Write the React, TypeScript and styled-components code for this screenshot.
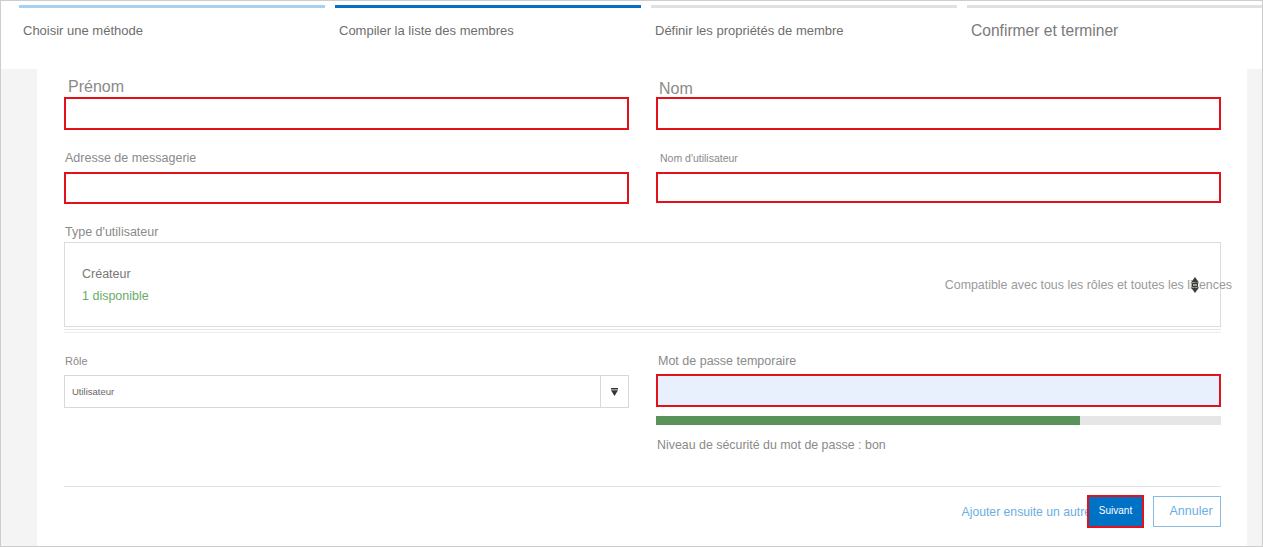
import React from "react";
import styled, { createGlobalStyle } from "styled-components";

const Global = createGlobalStyle`
  html, body { margin: 0; padding: 0; background: #fff; }
  * { box-sizing: border-box; }
`;

const Frame = styled.div`
  width: 1263px;
  height: 547px;
  border: 1px solid #cdcdcd;
  display: flex;
  flex-direction: column;
  background: #fff;
  font-family: "Liberation Sans", Arial, sans-serif;
  overflow: hidden;
`;

const Header = styled.header`
  flex: none;
  height: 68px;
  display: grid;
  grid-template-columns: 306px 306px 306px 1fr;
  column-gap: 10px;
  padding: 4px 0 0 18px;
`;

const Step = styled.div`
  display: flex;
  flex-direction: column;
`;

type StepState = "done" | "active" | "todo";

const StepBar = styled.div<{ $state: StepState }>`
  height: 3px;
  background: ${(p) =>
    p.$state === "done" ? "#a8d1f1" : p.$state === "active" ? "#0a6fc2" : "#e0e0e0"};
`;

const StepLabel = styled.div<{ $big?: boolean }>`
  margin-top: 15px;
  padding-left: 4px;
  font-size: ${(p) => (p.$big ? "15.6px" : "13px")};
  line-height: 16px;
  color: ${(p) => (p.$big ? "#7a7a7a" : "#6e6e6e")};
  white-space: nowrap;
`;

const Body = styled.div`
  flex: 1;
  display: flex;
  background: #f4f4f4;
  padding: 0 15px 0 36px;
`;

const Panel = styled.main`
  flex: 1;
  display: flex;
  flex-direction: column;
  background: #fff;
  padding: 0 26px 0 27px;
`;

const FieldGrid = styled.div<{ $top: number }>`
  display: grid;
  grid-template-columns: 565px 565px;
  column-gap: 27px;
  margin-top: ${(p) => p.$top}px;
`;

const Field = styled.div`
  display: flex;
  flex-direction: column;
  min-width: 0;
`;

const Label = styled.label<{ $size: number; $gap: number; $lh?: number; $inset?: number }>`
  display: block;
  font-size: ${(p) => p.$size}px;
  line-height: ${(p) => p.$lh ?? 14}px;
  margin-bottom: ${(p) => p.$gap}px;
  padding-left: ${(p) => p.$inset ?? 1}px;
  color: #8a8a8a;
  white-space: nowrap;
`;

const TextInput = styled.div<{ $h: number; $filled?: boolean }>`
  height: ${(p) => p.$h}px;
  border: 2px solid #e3111c;
  background: ${(p) => (p.$filled ? "#e8f0fe" : "#fff")};
`;

const TypeSection = styled.section`
  margin-top: 21px;
  display: flex;
  flex-direction: column;
`;

const TypeBox = styled.div`
  height: 85px;
  border: 1px solid #dcdcdc;
  display: flex;
  align-items: center;
  justify-content: space-between;
  padding-left: 17px;
`;

const TypeInfo = styled.div`
  display: flex;
  flex-direction: column;
  row-gap: 8px;
`;

const TypeName = styled.div`
  font-size: 12.5px;
  line-height: 14px;
  color: #777;
`;

const Available = styled.div`
  font-size: 12.5px;
  line-height: 14px;
  color: #6aab6a;
`;

const Compat = styled.div`
  position: relative;
  margin-right: -12px;
  font-size: 12.4px;
  line-height: 14px;
  color: #9a9a9a;
  white-space: nowrap;
`;

const SortIcon = styled.svg`
  position: absolute;
  right: 33px;
  top: -1px;
`;

const DoubleRule = styled.div`
  margin-top: 2px;
  height: 4px;
  border-top: 1px solid #e6e6e6;
  border-bottom: 1px solid #ececec;
`;

const Select = styled.div`
  height: 33px;
  display: flex;
  border: 1px solid #d8d8d8;
`;

const SelectValue = styled.div`
  flex: 1;
  display: flex;
  align-items: center;
  padding-left: 7px;
  font-size: 9.5px;
  color: #666;
`;

const SelectArrow = styled.div`
  width: 28px;
  border-left: 1px solid #d8d8d8;
  display: flex;
  align-items: center;
  justify-content: center;
`;

const Strength = styled.div`
  margin-top: 9px;
  height: 9px;
  display: flex;
  background: #e6e6e6;
`;

const StrengthFill = styled.div`
  background: #5a935a;
`;

const Hint = styled.div`
  margin-top: 13px;
  font-size: 12.4px;
  line-height: 14px;
  color: #8a8a8a;
  padding-left: 1px;
`;

const Divider = styled.hr`
  margin: 34px 0 0;
  border: 0;
  height: 1px;
  background: #e3e3e3;
`;

const Actions = styled.div`
  margin-top: 8px;
  display: flex;
  justify-content: flex-end;
  align-items: center;
`;

const LinkButton = styled.span`
  font-size: 12.2px;
  color: #6aaee3;
  white-space: nowrap;
`;

const PrimaryButton = styled.button`
  margin-left: -4px;
  width: 57px;
  height: 33px;
  border: 2px solid #e3111c;
  background: #0072c6;
  color: #fff;
  font-family: inherit;
  font-size: 10px;
  padding: 0 0 2px;
`;

const SecondaryButton = styled.button`
  margin-left: 9px;
  width: 68px;
  height: 31px;
  border: 1px solid #86bbe6;
  background: #fff;
  color: #6aaee3;
  font-family: inherit;
  font-size: 12.5px;
  padding: 0 0 1px 8px;
`;

const steps: { label: string; state: StepState; big?: boolean }[] = [
  { label: "Choisir une méthode", state: "done" },
  { label: "Compiler la liste des membres", state: "active" },
  { label: "Définir les propriétés de membre", state: "todo" },
  { label: "Confirmer et terminer", state: "todo", big: true },
];

export default function App() {
  const strength = 0.75;
  return (
    <>
      <Global />
      <Frame>
        <Header>
          {steps.map((s) => (
            <Step key={s.label}>
              <StepBar $state={s.state} />
              <StepLabel $big={s.big}>{s.label}</StepLabel>
            </Step>
          ))}
        </Header>
        <Body>
          <Panel>
            <FieldGrid $top={9}>
              <Field>
                <Label $size={16} $lh={18} $gap={1} $inset={4}>Prénom</Label>
                <TextInput $h={33} />
              </Field>
              <Field>
                <Label $size={16} $lh={22} $gap={-3} $inset={3}>Nom</Label>
                <TextInput $h={33} />
              </Field>
            </FieldGrid>

            <FieldGrid $top={21}>
              <Field>
                <Label $size={12.5} $gap={7}>Adresse de messagerie</Label>
                <TextInput $h={32} />
              </Field>
              <Field>
                <Label $size={10.5} $gap={7} $inset={4}>Nom d'utilisateur</Label>
                <TextInput $h={31} />
              </Field>
            </FieldGrid>

            <TypeSection>
              <Label $size={12.5} $gap={3}>Type d'utilisateur</Label>
              <TypeBox>
                <TypeInfo>
                  <TypeName>Créateur</TypeName>
                  <Available>1 disponible</Available>
                </TypeInfo>
                <Compat>
                  Compatible avec tous les rôles et toutes les licences
                  <SortIcon width="8" height="16" viewBox="0 0 8 16">
                    <polygon points="4,0 8,5.5 0,5.5" fill="#3c3c3c" />
                    <rect x="1" y="6" width="6" height="4" fill="#3c3c3c" />
                    <rect x="2" y="7.5" width="4" height="1" fill="#fff" />
                    <polygon points="0,10.5 8,10.5 4,16" fill="#3c3c3c" />
                  </SortIcon>
                </Compat>
              </TypeBox>
              <DoubleRule />
            </TypeSection>

            <FieldGrid $top={21}>
              <Field>
                <Label $size={11} $gap={7}>Rôle</Label>
                <Select>
                  <SelectValue>Utilisateur</SelectValue>
                  <SelectArrow>
                    <svg width="7" height="8" viewBox="0 0 7 8">
                      <rect x="0" y="0" width="7" height="1.5" fill="#333" />
                      <polygon points="0,2.2 7,2.2 3.5,8" fill="#333" />
                    </svg>
                  </SelectArrow>
                </Select>
              </Field>
              <Field>
                <Label $size={12.5} $gap={6} $inset={2}>Mot de passe temporaire</Label>
                <TextInput $h={33} $filled />
                <Strength>
                  <StrengthFill style={{ width: `${strength * 100}%` }} />
                </Strength>
                <Hint>Niveau de sécurité du mot de passe : bon</Hint>
              </Field>
            </FieldGrid>

            <Divider />

            <Actions>
              <LinkButton>Ajouter ensuite un autre</LinkButton>
              <PrimaryButton>Suivant</PrimaryButton>
              <SecondaryButton>Annuler</SecondaryButton>
            </Actions>
          </Panel>
        </Body>
      </Frame>
    </>
  );
}
